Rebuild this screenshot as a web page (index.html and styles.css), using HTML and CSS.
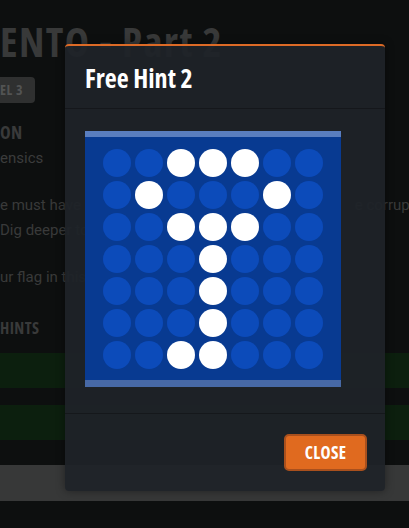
FILE: index.html
```html
<!DOCTYPE html>
<html>
<head>
<meta charset="utf-8">
<link rel="stylesheet" href="styles.css">
</head>
<body>
<div class="page">
  <h1 class="title">ENTO - Part 2</h1>
  <span class="badge">EL 3</span>
  <div class="label">ON</div>
  <div class="cat">ensics</div>
  <div class="desc split"><span>e must have been stored in the very</span><span>e corrupted</span></div>
  <div class="desc">Dig deeper to find out more</div>
  <div class="desc para">ur flag in this</div>
  <div class="label hints">HINTS</div>
  <div class="bar green"></div>
  <div class="bar green second"></div>
  <div class="bar gray"></div>
</div>

<div class="modal">
  <div class="modal-header">
    <h2 class="modal-title">Free Hint 2</h2>
  </div>
  <div class="modal-body">
    <div class="hint-image">
      <div class="grid">
        <i></i><i></i><i class="on"></i><i class="on"></i><i class="on"></i><i></i><i></i>
        <i></i><i class="on"></i><i></i><i></i><i></i><i class="on"></i><i></i>
        <i></i><i></i><i class="on"></i><i class="on"></i><i class="on"></i><i></i><i></i>
        <i></i><i></i><i></i><i class="on"></i><i></i><i></i><i></i>
        <i></i><i></i><i></i><i class="on"></i><i></i><i></i><i></i>
        <i></i><i></i><i></i><i class="on"></i><i></i><i></i><i></i>
        <i></i><i></i><i class="on"></i><i class="on"></i><i></i><i></i><i></i>
      </div>
    </div>
  </div>
  <div class="modal-footer">
    <button class="btn-close">CLOSE</button>
  </div>
</div>
</body>
</html>
```
FILE: styles.css
```css
html, body {
  margin: 0;
  padding: 0;
  height: 100%;
  overflow: hidden;
}
body {
  background: #0d0f0f;
  font-family: Roboto, "Noto Sans", sans-serif;
}
.page {
  width: 409px;
  overflow: hidden;
  padding-top: 19px;
}
.title,
.badge,
.label,
.modal-title,
.btn-close {
  font-family: "Open Sans", "Noto Sans", sans-serif;
  font-stretch: 75%;
}
.title {
  margin: 0;
  font-weight: 700;
  font-size: 41px;
  line-height: 44px;
  letter-spacing: 1.4px;
  color: #383939;
  white-space: nowrap;
}
.badge {
  display: inline-block;
  margin-top: 14px;
  margin-left: -8px;
  padding: 0 12px 0 8px;
  height: 26px;
  line-height: 26px;
  background: #2f3030;
  border-radius: 4px;
  color: #525353;
  font-weight: 700;
  font-size: 14px;
  letter-spacing: 0.6px;
  vertical-align: top;
}
.label {
  margin-top: 19px;
  font-weight: 700;
  font-size: 18px;
  line-height: 20px;
  letter-spacing: 0.4px;
  color: #393a3a;
}
.cat {
  margin-top: 4px;
  font-size: 15px;
  line-height: 24px;
  color: #3b3c3c;
}
.desc {
  font-size: 15px;
  line-height: 25px;
  color: #393a3a;
  white-space: nowrap;
}
.desc.split {
  margin-top: 23px;
  display: flex;
  justify-content: space-between;
  width: 431px;
}
.desc.para {
  margin-top: 22px;
}
.label.hints {
  margin-top: 28px;
  font-size: 16px;
}
.bar {
  height: 35px;
}
.bar.green {
  margin-top: 15px;
  background: #0c1f0e;
}
.bar.green.second {
  margin-top: 17px;
}
.bar.gray {
  margin-top: 25px;
  height: 36px;
  background: #373838;
}

/* modal */
.modal {
  position: absolute;
  left: 65px;
  top: 44px;
  width: 320px;
  background: rgba(31, 35, 40, 0.95);
  border-top: 2px solid #dc6a26;
  border-radius: 4px;
  box-shadow: 0 0 10px rgba(0, 0, 0, 0.4);
}
.modal-header {
  height: 62px;
  padding: 0 20px;
  display: flex;
  align-items: center;
  border-bottom: 1px solid rgba(14, 16, 19, 0.55);
}
.modal-title {
  margin: 0;
  padding-top: 2px;
  font-weight: 700;
  font-size: 26px;
  color: #ffffff;
}
.modal-body {
  padding: 22px 20px 26px;
  border-bottom: 1px solid rgba(14, 16, 19, 0.55);
}
.hint-image {
  width: 256px;
  height: 256px;
  box-sizing: border-box;
  background: #083a91;
  border-top: 6px solid #5a7ebf;
  border-bottom: 7px solid #4769a6;
  padding: 12px 18px 11px;
}
.grid {
  display: grid;
  grid-template-columns: repeat(7, 28px);
  grid-auto-rows: 28px;
  gap: 4px;
}
.grid i {
  display: block;
  border-radius: 50%;
  background: #0c4bba;
}
.grid i.on {
  background: #ffffff;
}
.modal-footer {
  height: 77px;
  padding: 0 18px 0 0;
  display: flex;
  justify-content: flex-end;
  align-items: center;
  box-sizing: border-box;
}
.btn-close {
  width: 83px;
  height: 37px;
  background: #e06a1f;
  border: 2px solid #a9501d;
  border-radius: 5px;
  color: #ffffff;
  font-weight: 700;
  font-size: 17px;
  letter-spacing: 0.3px;
  padding: 0;
}
```
